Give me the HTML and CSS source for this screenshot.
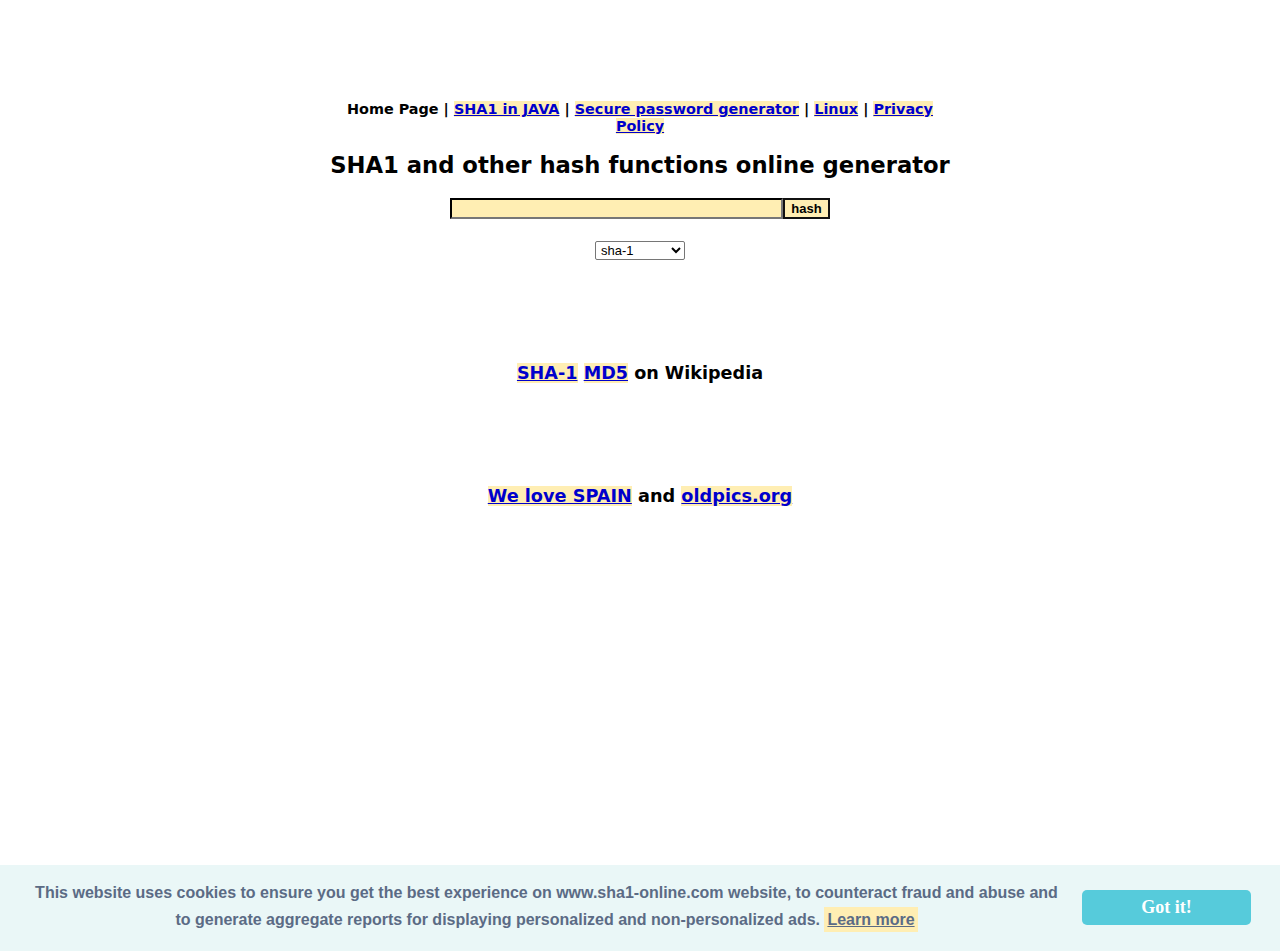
FILE: index.html
```html
<!DOCTYPE html>
<html>
<head>
<meta charset="utf-8">
<title>SHA1 online</title>
<link rel="stylesheet" href="styles.css">
</head>
<body>
<div class="page">
  <nav class="nav">Home Page | <a href="#">SHA1 in JAVA</a> | <a href="#">Secure password generator</a> | <a href="#">Linux</a> | <a href="#">Privacy Policy</a></nav>
  <h1 class="title">SHA1 and other hash functions online generator</h1>
  <form class="hashform">
    <div class="row"><input class="field" type="text"><button class="btn" type="button">hash</button></div>
    <div class="row selrow"><select class="sel"><option>sha-1</option><option>md5</option></select></div>
  </form>
  <p class="wiki"><a href="#">SHA-1</a> <a href="#">MD5</a> on Wikipedia</p>
  <p class="love"><a href="#">We love SPAIN</a> and <a href="#">oldpics.org</a></p>
</div>
<div class="cookie">
  <div class="cookie-text">This website uses cookies to ensure you get the best experience on www.sha1-online.com website, to counteract fraud and abuse and to generate aggregate reports for displaying personalized and non-personalized ads. <a class="learn" href="#">Learn more</a></div>
  <a class="gotit" href="#">Got it!</a>
</div>
</body>
</html>
```
FILE: styles.css
```css
html, body { margin: 0; padding: 0; background: #fff; }
body { font-family: "DejaVu Sans", Verdana, sans-serif; color: #000; }
.page { width: 600px; margin: 0 auto; padding-top: 101px; text-align: center; }
a { color: #0000cc; background: #ffeeb3; text-decoration: underline; }
.nav { font-size: 14.4px; font-weight: bold; line-height: 17px; }
.title { font-size: 22.7px; font-weight: bold; margin: 15px -20px 0; line-height: 30px; white-space: nowrap; }
.hashform { margin-top: 18px; }
.row { display: flex; justify-content: center; }
.field { width: 333px; height: 21px; box-sizing: border-box; background: #ffeeb3; border: 2px inset #777; border-top-color: #222; border-left-color: #222; margin: 0; padding: 0; }
.btn { height: 21px; box-sizing: border-box; background: #ffeeb3; border: 2px solid #111; font: bold 13px "Liberation Sans", Arial, sans-serif; padding: 0 6px; margin: 0; line-height: 14px; }
.selrow { margin-top: 22px; }
.sel { width: 90px; height: 19px; font: 13px "Liberation Sans", Arial, sans-serif; border: 1px solid #767676; border-radius: 2px; background: #fff; padding: 0 1px; }
.wiki { font-size: 17.6px; font-weight: bold; margin: 100px 0 0; line-height: 26px; }
.love { font-size: 17.7px; font-weight: bold; margin: 97px 0 0; line-height: 26px; }
.cookie { position: fixed; left: 0; right: 0; bottom: 0; height: 86px; background: #eaf7f7; display: flex; align-items: center; font-family: "Liberation Sans", Arial, sans-serif; }
.cookie-text { flex: 1; text-align: center; color: #5b6b85; font-size: 16px; font-weight: bold; line-height: 27px; padding: 0 19px 4px 33px; }
.learn { color: #5b6b85; background: #ffeeb3; padding: 4px 3px; }
.gotit { width: 169px; height: 35px; margin: 0 29px 2px 3px; background: #56cbdb; border-radius: 5px; color: #fff; text-decoration: none; font: bold 18px "Liberation Serif", Georgia, serif; display: flex; align-items: center; justify-content: center; }
```
